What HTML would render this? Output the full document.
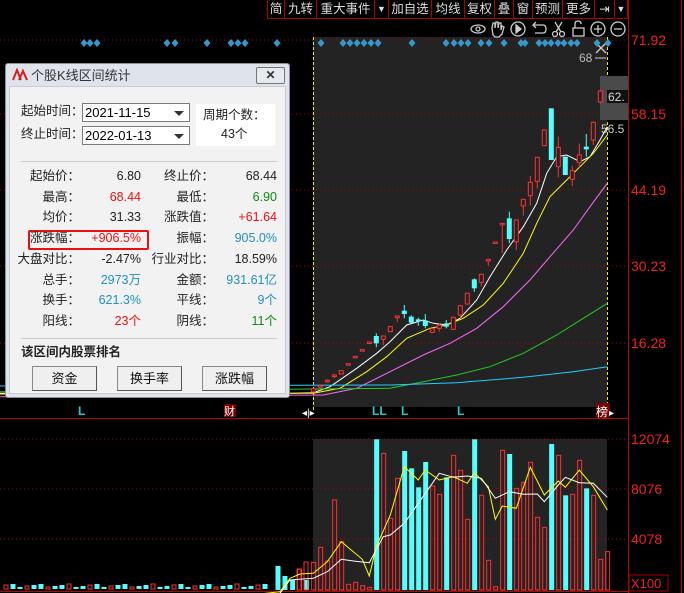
<!DOCTYPE html>
<html><head><meta charset="utf-8">
<style>
*{margin:0;padding:0;box-sizing:border-box}
body{width:684px;height:593px;background:#000;overflow:hidden;position:relative;font-family:"Liberation Sans","Noto Sans CJK SC",sans-serif;}
.tb{position:absolute;top:0;height:18px;color:#ddd;font-size:12.5px;line-height:18px;text-align:center;border-right:1px solid #a00;}
#dlg{position:absolute;left:5px;top:63px;width:285px;height:335px;background:#dfe4ec;border:1px solid #8a8f98;border-radius:3px}
#dlg .in{position:absolute;left:3px;top:22px;width:277px;height:308px;background:#f2f2f2;border:1px solid #c8ccd2}
.t{position:absolute;font-size:12.5px;color:#222;white-space:nowrap;line-height:14px}
.r{text-align:right}
.red{color:#f01010}.grn{color:#108a10}.blu{color:#2090c0}
.combo{position:absolute;left:72px;width:108px;height:19px;background:#fff;border:1px solid #7a7a7a;font-size:13px;line-height:17px;padding-left:2px;color:#000}
.combo:after{content:"";position:absolute;right:5px;top:7px;border-left:5px solid transparent;border-right:5px solid transparent;border-top:5px solid #333}
.btn{position:absolute;top:279px;width:65px;height:25px;background:#efefef;border:1px solid #888;border-right-color:#555;border-bottom-color:#555;font-size:13px;text-align:center;line-height:23px;color:#111}
</style></head><body>
<div class="tb" style="left:267px;width:18px;border-left:1px solid #a00">简</div>
<div class="tb" style="left:285px;width:32px">九转</div>
<div class="tb" style="left:317px;width:58px">重大事件</div>
<div class="tb" style="left:375px;width:14px;font-size:9px">▼</div>
<div class="tb" style="left:389px;width:43px">加自选</div>
<div class="tb" style="left:432px;width:33px">均线</div>
<div class="tb" style="left:465px;width:30px">复权</div>
<div class="tb" style="left:495px;width:19px">叠</div>
<div class="tb" style="left:514px;width:19px">窗</div>
<div class="tb" style="left:533px;width:30px">预测</div>
<div class="tb" style="left:563px;width:32px">更多</div>
<div class="tb" style="left:595px;width:20px">⇥</div>
<div class="tb" style="left:615px;width:13px;font-size:9px">▼</div>
<svg id="ch" width="684" height="593" style="position:absolute;left:0;top:0">
<line x1="267" y1="18.5" x2="628" y2="18.5" stroke="#a00"/>
<rect x="313" y="37" width="294" height="370" fill="#232323"/>
<rect x="313" y="439" width="294" height="152" fill="#232323"/>
<line x1="628.5" y1="0" x2="628.5" y2="593" stroke="#b00"/>
<line x1="681.5" y1="0" x2="681.5" y2="593" stroke="#b00"/>
<line x1="0" y1="418.5" x2="628" y2="418.5" stroke="#b00"/>
<line x1="0" y1="591.5" x2="628" y2="591.5" stroke="#b00"/>
<g stroke="#a00" stroke-dasharray="1,3">
<line x1="0" y1="40" x2="628" y2="40"/><line x1="0" y1="114" x2="628" y2="114"/><line x1="0" y1="190" x2="628" y2="190"/><line x1="0" y1="266" x2="628" y2="266"/><line x1="0" y1="343" x2="628" y2="343"/>
<line x1="0" y1="439" x2="628" y2="439"/><line x1="0" y1="489" x2="628" y2="489"/><line x1="0" y1="539" x2="628" y2="539"/>
</g>
<g font-size="14" fill="#f02020" font-family="Liberation Sans">
<text x="631" y="45">71.92</text><text x="631" y="119">58.15</text><text x="631" y="195">44.19</text><text x="631" y="271">30.23</text><text x="631" y="348">16.28</text>
<text x="631" y="444">12074</text><text x="631" y="494">8076</text><text x="631" y="544">4078</text>
</g>
<rect x="629" y="575" width="39" height="16" fill="none" stroke="#a00"/>
<text x="631" y="588" font-size="13" fill="#f02020">X100</text>
<line x1="313.5" y1="37" x2="313.5" y2="410" stroke="#ee0" stroke-dasharray="3,2"/>
<line x1="607.5" y1="37" x2="607.5" y2="410" stroke="#ee0" stroke-dasharray="3,2"/>
<rect x="600" y="76" width="28" height="44" fill="#4a4a4a"/>
<rect x="607" y="90" width="21" height="13" fill="#111"/>
<text x="608" y="101" font-size="12" fill="#ddd">62.</text>
<text x="601" y="133" font-size="12" fill="#ccc">56.5</text>
<text x="579" y="62" font-size="12" fill="#bbb">68</text>
<line x1="595" y1="58" x2="606" y2="58" stroke="#ccc"/>
<g stroke="#ccc" stroke-width="1.3" fill="none">
<path d="M596 43 L606 53 M606 43 L596 53"/>
<ellipse cx="478" cy="29" rx="7" ry="4"/><circle cx="478" cy="29" r="2"/>
<path d="M493 35 L492 28 L493 23 L495 23 L495 28 L496 22 L498 22 L498 28 L499 23 L501 23 L501 30 L502 26 L504 27 L502 34 L499 37 L495 37 Z"/>
<circle cx="518" cy="29" r="7"/><path d="M516 25 L521 29 L516 33 Z" fill="#ccc"/>
<path d="M534 25 L543 25 Q546 25 546 29 Q546 33 543 33 L535 33 M536 22 L533 25 L536 28"/>
<circle cx="555" cy="34" r="2.5"/><circle cx="562" cy="34" r="2.5"/><path d="M556 32 L562 22 M561 32 L555 22"/>
<rect x="573" y="28" width="11" height="8"/><path d="M575 28 L575 24 Q575 21 578 21 Q581 21 581 24"/>
<circle cx="598" cy="29" r="7"/><path d="M594 29 L602 29 M598 25 L598 33"/>
<circle cx="618" cy="29" r="7"/><path d="M614 29 L622 29"/>
</g>
<g id="dia" fill="#3399cc"></g>
<g id="ma" fill="none" stroke-width="1"></g>
<g id="cd"></g>
<g id="vol"></g>
<g font-size="12" font-weight="bold">
<text x="78" y="415" fill="#2cc">L</text>
<text x="372" y="415" fill="#2cc">LL</text><text x="401" y="415" fill="#2cc">L</text><text x="457" y="415" fill="#2cc">L</text>
</g>
<rect x="224" y="404" width="12" height="13" fill="#700"/><text x="224" y="415" font-size="11" fill="#fff">财</text>
<rect x="596" y="403" width="14" height="15" fill="#700"/><text x="596" y="416" font-size="12" fill="#fff">榜</text>
<text x="302" y="416" font-size="10" fill="#fff">◂|▸</text><text x="609" y="416" font-size="10" fill="#fff">▸</text>
</svg>
<div id="dlg">
<svg width="20" height="14" style="position:absolute;left:5px;top:4px"><path d="M2 12 L6 2 L10 12 M8 12 L12 3 L16 12" stroke="#c22" stroke-width="2" fill="none"/></svg>
<div class="t" style="left:25px;top:5px;font-size:13px;color:#333">个股K线区间统计</div>
<div style="position:absolute;left:250px;top:3px;width:29px;height:17px;border:1px solid #777;background:#e6e9ee;border-radius:2px;text-align:center;font-size:12px;line-height:15px;color:#333;font-weight:bold">✕</div>
<div class="in">
<div class="t" style="left:11px;top:17px">起始时间：</div>
<div class="combo" style="top:16px">2021-11-15</div>
<div class="t" style="left:11px;top:40px">终止时间：</div>
<div class="combo" style="top:39px">2022-01-13</div>
<div style="position:absolute;left:186px;top:17px;width:79px;height:42px;background:#fff"></div>
<div class="t" style="left:193px;top:21px">周期个数：</div>
<div class="t" style="left:211px;top:40px">43个</div>
<div style="position:absolute;left:11px;top:74px;width:256px;height:1px;background:#ccc"></div>
<div style="position:absolute;left:18px;top:143px;width:121px;height:20px;border:2px solid #e81010;border-radius:2px"></div>
<div id="rows"></div>
<div style="position:absolute;left:11px;top:251px;width:256px;height:1px;background:#ccc"></div>
<div class="t" style="left:11px;top:258px;font-weight:bold">该区间内股票排名</div>
<div class="btn" style="left:22px">资金</div>
<div class="btn" style="left:107px">换手率</div>
<div class="btn" style="left:192px">涨跌幅</div>
</div></div>
<script>
var rows=[["起始价：","6.80","","终止价：","68.44",""],["最高：","68.44","red","最低：","6.90","grn"],["均价：","31.33","","涨跌值：","+61.64","red"],["涨跌幅：","+906.5%","red","振幅：","905.0%","blu"],["大盘对比：","-2.47%","","行业对比：","18.59%",""],["总手：","2973万","blu","金额：","931.61亿","blu"],["换手：","621.3%","blu","平线：","9个","blu"],["阳线：","23个","red","阴线：","11个","grn"]];
var h="";rows.forEach(function(r,i){var y=82+i*20.7;
h+='<div class="t r" style="left:0;width:70px;top:'+y+'px">'+r[0]+'</div>';
h+='<div class="t r '+r[2]+'" style="left:60px;width:71px;top:'+y+'px">'+r[1]+'</div>';
h+='<div class="t r" style="left:130px;width:74px;top:'+y+'px">'+r[3]+'</div>';
h+='<div class="t r '+r[5]+'" style="left:190px;width:77px;top:'+y+'px">'+r[4]+'</div>';});
document.getElementById("rows").innerHTML=h;
var NS="http://www.w3.org/2000/svg";
function el(g,t,a){var e=document.createElementNS(NS,t);for(var k in a)e.setAttribute(k,a[k]);document.getElementById(g).appendChild(e);return e;}
var dx=[84,90,97,167,175,207,231,238,245,277,321,343,350,357,364,371,378,412,446,454,461,468,481,489,504,521,525,539,545,551,558,564,571,577,597,608];
dx.forEach(function(x){el("dia","path",{d:"M"+x+" 39 L"+(x+3.5)+" 43 L"+x+" 47 L"+(x-3.5)+" 43Z"});});
function Y(z){return 60+z/3} function X(z){return 290+z/3}
function line(pts,c,yf){var d=pts.map(function(p,i){return (i?"L":"M")+X(p[0]).toFixed(1)+" "+yf(p[1]).toFixed(1)}).join(" ");el("ma","path",{d:d,stroke:c});}
var Yv=function(z){return 400+z/3};
line([[-870,1000],[0,1000],[70,998],[120,980],[200,925],[260,880],[300,845],[350,795],[400,780],[430,790],[470,795],[510,775],[560,720],[600,650],[650,570],[700,500],[740,430],[770,340],[800,290],[830,285],[870,305],[900,290],[930,240],[952,200]],"#fff",Y);
line([[-870,1002],[70,1000],[150,985],[230,935],[290,890],[350,835],[420,805],[470,795],[520,775],[580,735],[640,670],[700,580],[740,490],[780,410],[830,360],[870,320],[910,280],[952,225]],"#ff0",Y);
line([[-870,1010],[100,1005],[200,985],[300,935],[400,885],[480,850],[560,805],[640,740],[720,660],[780,590],[850,510],[900,440],[952,370]],"#f6f",Y);
line([[-870,995],[300,985],[400,965],[500,945],[600,920],[700,880],[800,825],[880,775],[952,730]],"#2c2",Y);
line([[-870,978],[300,975],[500,968],[700,952],[850,935],[952,920]],"#2cf",Y);
var C=[[0,986,996,984,998,"r"],[1,977,980,975,985,"r"],[2,961,964,958,968,"r"],[3,945,949,942,955,"r"],[4,932,942,930,944,"r"],[5,911,914,910,916,"r"],[6,889,892,888,894,"r"],[7,869,872,868,874,"r"],[8,846,849,845,851,"r"],[9,828,850,820,862,"c"],[10,828,838,826,855,"r"],[11,800,815,798,817,"r"],[12,768,773,766,787,"r"],[13,752,762,735,775,"c"],[14,770,788,766,790,"c"],[15,778,784,773,797,"c"],[16,782,798,762,805,"c"],[17,806,817,804,819,"r"],[18,795,805,790,815,"r"],[19,790,800,780,805,"c"],[20,772,808,770,810,"r"],[21,737,765,735,775,"r"],[22,700,732,698,734,"r"],[23,658,685,655,695,"c"],[24,643,667,641,680,"r"],[25,598,603,596,617,"r"],[26,546,550,545,552,"r"],[27,490,494,490,580,"r"],[28,475,537,455,550,"c"],[29,480,545,478,570,"r"],[30,418,438,416,467,"r"],[31,367,407,348,437,"r"],[32,292,364,290,385,"r"],[33,210,257,208,259,"r"],[34,145,300,145,300,"c"],[35,262,320,230,352,"r"],[36,290,345,290,345,"c"],[37,332,358,318,378,"r"],[38,285,308,250,322,"r"],[39,260,268,222,290,"c"],[40,187,240,185,255,"r"],[41,93,126,90,130,"r"]];
C.forEach(function(c){var x=313.3+c[0]*7;var col=c[5]=="r"?"#ff3030":"#55ffff";
el("cd","line",{x1:x,x2:x,y1:Y(c[3]),y2:Y(c[4]),stroke:col});
var t=Y(c[1]),b=Y(c[2]);if(b-t<1.5)b=t+1.5;
if(c[5]=="r")el("cd","rect",{x:x-2,y:t,width:4,height:b-t,fill:"#232323",stroke:col});
else el("cd","rect",{x:x-2.5,y:t,width:5,height:b-t,fill:col});});
var V=[["c",540],["r",508],["c",540],["r",487],["r",442],["r",483],["r",300],["r",425],["r",553],["r",547],["r",557],["r",562],["c",118],["r",160],["r",355],["r",235],["c",153],["c",205],["c",262],["c",186],["r",258],["r",283],["c",232],["r",166],["r",211],["r",358],["c",118],["r",286],["r",481],["r",560],["r",151],["c",162],["r",265],["r",247],["r",187],["r",352],["r",382],["c",132],["r",166],["c",286],["r",283],["r",181],["c",265],["r",286],["r",478],["r",455]];
V.forEach(function(v,i){var x=X(8+i*21),t=Yv(v[1]);
if(v[0]=="r")el("vol","rect",{x:x-2,y:t,width:4,height:590-t,fill:"none",stroke:"#ff3030"});
else el("vol","rect",{x:x-2.5,y:t,width:5,height:590-t,fill:"#55ffff"});});
for(var x=6;x<270;x+=7){var r=(Math.floor(x/7)%3==0);var h=2+((x*7)%4);
if(r)el("vol","rect",{x:x-2,y:589-h,width:4,height:h,fill:"none",stroke:"#ff3030"});else el("vol","rect",{x:x-2.5,y:589-h,width:5,height:h,fill:"#55ffff"});}
[[278,566,"c"],[285,576,"c"],[299,569,"r"],[306,562,"r"]].forEach(function(b){if(b[2]=="c")el("vol","rect",{x:b[0]-2.5,y:b[1],width:5,height:590-b[1],fill:"#55ffff"});else el("vol","rect",{x:b[0]-2,y:b[1],width:4,height:590-b[1],fill:"none",stroke:"#ff3030"});});
function vl(pts,c){var d=pts.map(function(p,i){return (i?"L":"M")+X(p[0]).toFixed(1)+" "+Yv(p[1]).toFixed(1)}).join(" ");el("vol","path",{d:d,stroke:c,fill:"none"});}
vl([[-870,586],[-500,586],[-300,585],[-100,583],[-30,575],[0,535],[30,522],[70,520],[112,485],[154,425],[217,478],[238,528],[259,440],[301,345],[343,200],[385,240],[406,210],[448,240],[490,230],[532,250],[553,218],[595,260],[616,358],[637,318],[679,325],[721,202],[763,285],[805,243],[826,262],[868,210],[910,260],[952,330]],"#ff0");
vl([[-870,588],[-300,587],[-100,586],[-30,580],[0,540],[70,535],[112,515],[154,478],[196,484],[238,488],[280,410],[301,405],[343,370],[385,310],[448,220],[490,232],[532,228],[574,235],[616,295],[658,275],[700,283],[742,282],[763,305],[805,255],[826,232],[868,248],[910,250],[952,292]],"#fff");
</script>
</body></html>
